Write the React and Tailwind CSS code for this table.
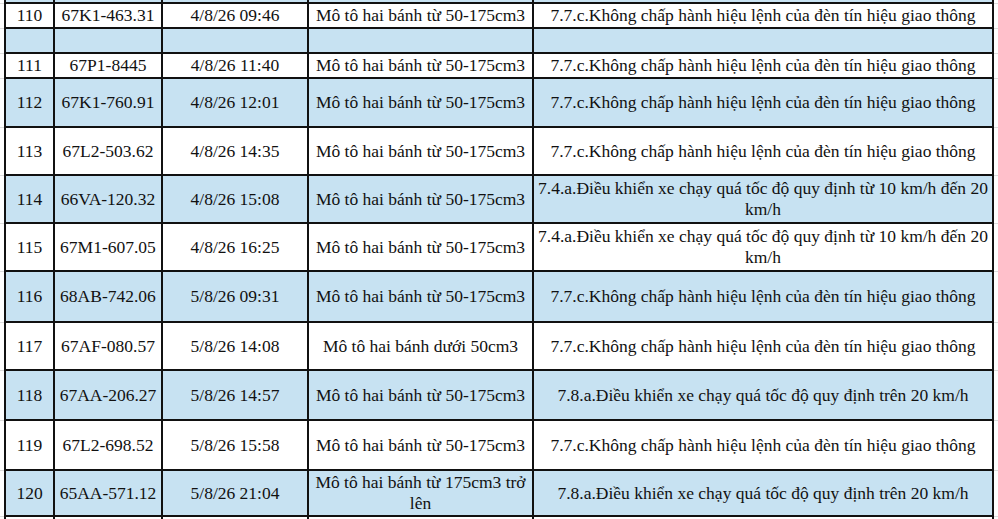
import React from 'react';

const A = '7.7.c.Không chấp hành hiệu lệnh của đèn tín hiệu giao thông';
const B = ['7.4.a.Điều khiển xe chạy quá tốc độ quy định từ 10 km/h đến 20', 'km/h'];
const C = '7.8.a.Điều khiển xe chạy quá tốc độ quy định trên 20 km/h';
const M = 'Mô tô hai bánh từ 50-175cm3';

// h = row height in px, blue = shaded row
const rows = [
  { h: 'h-[24px]', blue: true, cells: ['', '', '', '', ''] },
  { h: 'h-[25px]', blue: false, cells: ['110', '67K1-463.31', '4/8/26 09:46', M, A] },
  { h: 'h-[25px]', blue: true, cells: ['', '', '', '', ''] },
  { h: 'h-[25px]', blue: false, cells: ['111', '67P1-8445', '4/8/26 11:40', M, A] },
  { h: 'h-[49px]', blue: true, cells: ['112', '67K1-760.91', '4/8/26 12:01', M, A] },
  { h: 'h-[48px]', blue: false, cells: ['113', '67L2-503.62', '4/8/26 14:35', M, A] },
  { h: 'h-[48px]', blue: true, cells: ['114', '66VA-120.32', '4/8/26 15:08', M, B] },
  { h: 'h-[48px]', blue: false, cells: ['115', '67M1-607.05', '4/8/26 16:25', M, B] },
  { h: 'h-[51px]', blue: true, cells: ['116', '68AB-742.06', '5/8/26 09:31', M, A] },
  { h: 'h-[48px]', blue: false, cells: ['117', '67AF-080.57', '5/8/26 14:08', 'Mô tô hai bánh dưới 50cm3', A] },
  { h: 'h-[50px]', blue: true, cells: ['118', '67AA-206.27', '5/8/26 14:57', M, C] },
  { h: 'h-[50px]', blue: false, cells: ['119', '67L2-698.52', '5/8/26 15:58', M, A] },
  { h: 'h-[46px]', blue: true, cells: ['120', '65AA-571.12', '5/8/26 21:04', ['Mô tô hai bánh từ 175cm3 trở', 'lên'], C] },
  { h: 'h-[40px]', blue: false, cells: ['', '', '', '', ''] },
];

const CellText = ({ value }) => {
  if (Array.isArray(value)) {
    return (
      <>
        {value.map((line, i) => (
          <span key={i} className="block whitespace-nowrap">{line}</span>
        ))}
      </>
    );
  }
  return <span className="whitespace-nowrap">{value}</span>;
};

export default function App() {
  return (
    <div className="w-[998px] h-[519px] overflow-hidden bg-white">
      <table className="-mt-[22px] w-[1000px] table-fixed border-collapse font-['Liberation_Serif',serif] text-[17.5px] leading-[21px] text-[#111]">
        <colgroup>
          <col className="w-[5px]" />
          <col className="w-[49px]" />
          <col className="w-[108px]" />
          <col className="w-[146px]" />
          <col className="w-[225px]" />
          <col className="w-[460px]" />
          <col className="w-[7px]" />
        </colgroup>
        <tbody>
          {rows.map((row, i) => (
            <tr key={i} className={row.h}>
              <td className="border-y border-[#dcdcdc] bg-white p-0" />
              {row.cells.map((c, j) => (
                <td
                  key={j}
                  className={`border-2 border-[#111] p-0 text-center align-middle ${
                    row.blue ? 'bg-[#c7e2f2]' : 'bg-white'
                  }`}
                >
                  <CellText value={c} />
                </td>
              ))}
              <td className="border-y border-[#dcdcdc] bg-white p-0" />
            </tr>
          ))}
        </tbody>
      </table>
    </div>
  );
}
